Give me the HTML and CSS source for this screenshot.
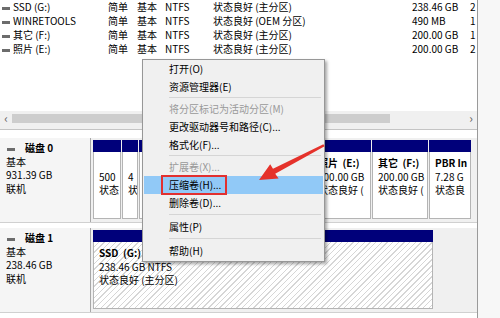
FILE: index.html
```html
<!DOCTYPE html>
<html lang="zh-CN">
<head>
    <meta charset="UTF-8">
    <title>磁盘管理</title>
    <link rel="stylesheet" href="styles.css">
</head>
<body>

    <div class="window">
        <div class="main">
            <!-- Liste des volumes -->
            <div class="volumes">
                <div class="vol-row">
                    <span><i class="dash"></i>SSD (G:)</span><span>简单</span><span>基本</span><span>NTFS</span>
                    <span>状态良好 (主分区)</span><span>238.46 GB</span><span>2</span>
                </div>
                <div class="vol-row">
                    <span><i class="dash"></i>WINRETOOLS</span><span>简单</span><span>基本</span><span>NTFS</span>
                    <span>状态良好 (OEM 分区)</span><span>490 MB</span><span>1</span>
                </div>
                <div class="vol-row">
                    <span><i class="dash"></i>其它 (F:)</span><span>简单</span><span>基本</span><span>NTFS</span>
                    <span>状态良好 (主分区)</span><span>200.00 GB</span><span>1</span>
                </div>
                <div class="vol-row">
                    <span><i class="dash"></i>照片 (E:)</span><span>简单</span><span>基本</span><span>NTFS</span>
                    <span>状态良好 (主分区)</span><span>200.00 GB</span><span>2</span>
                </div>
            </div>

            <div class="hscroll">
                <span class="scroll-btn">&lsaquo;</span>
                <span class="thumb"></span>
                <span class="track"></span>
                <span class="scroll-btn">&rsaquo;</span>
            </div>

            <div class="splitter"></div>

            <!-- Vue graphique des disques -->
            <div class="disks">
                <div class="disk">
                    <div class="disk-label">
                        <div class="disk-name"><i class="dash"></i>磁盘 0</div>
                        <div>基本</div>
                        <div>931.39 GB</div>
                        <div>联机</div>
                    </div>
                    <div class="parts">
                        <div class="part p-500">
                            <div class="bar"></div>
                            <div class="body"><b>&nbsp;</b><span>500</span><span>状态</span></div>
                        </div>
                        <div class="part p-small">
                            <div class="bar"></div>
                            <div class="body"><b>&nbsp;</b><span>4</span><span>状</span></div>
                        </div>
                        <div class="part p-sys">
                            <div class="bar"></div>
                            <div class="body"><b>(C:)</b><span>523.61 GB NTFS</span><span>状态良好</span></div>
                        </div>
                        <div class="part p-e">
                            <div class="bar"></div>
                            <div class="body"><b>照片  (E:)</b><span>200.00 GB</span><span>状态良好 (</span></div>
                        </div>
                        <div class="part p-f">
                            <div class="bar"></div>
                            <div class="body"><b>其它  (F:)</b><span>200.00 GB</span><span>状态良好 (</span></div>
                        </div>
                        <div class="part p-pbr">
                            <div class="bar"></div>
                            <div class="body"><b>PBR In</b><span>7.28 G</span><span>状态良</span></div>
                        </div>
                    </div>
                </div>

                <div class="disk">
                    <div class="disk-label">
                        <div class="disk-name"><i class="dash"></i>磁盘 1</div>
                        <div>基本</div>
                        <div>238.46 GB</div>
                        <div>联机</div>
                    </div>
                    <div class="parts">
                        <div class="part p-ssd selected">
                            <div class="bar"></div>
                            <div class="body"><b>SSD  (G:)</b><span>238.46 GB NTFS</span><span>状态良好 (主分区)</span></div>
                        </div>
                    </div>
                </div>
            </div>
        </div>
        <div class="side"></div>
    </div>

    <!-- Menu contextuel -->
    <div class="menu">
        <div class="menu-item">打开(O)</div>
        <div class="menu-item">资源管理器(E)</div>
        <div class="menu-sep"></div>
        <div class="menu-item disabled">将分区标记为活动分区(M)</div>
        <div class="menu-item">更改驱动器号和路径(C)...</div>
        <div class="menu-item">格式化(F)...</div>
        <div class="menu-sep"></div>
        <div class="menu-item disabled">扩展卷(X)...</div>
        <div class="menu-item active">压缩卷(H)...<span class="mark"></span></div>
        <div class="menu-item">删除卷(D)...</div>
        <div class="menu-sep wide"></div>
        <div class="menu-item">属性(P)</div>
        <div class="menu-sep wide"></div>
        <div class="menu-item">帮助(H)</div>
    </div>

    <svg class="pointer" width="500" height="318" viewBox="0 0 500 318">
        <polygon fill="#e5322b" points="259,180 270.2,164.2 273.0,168.8 323.4,144.2 324.6,146.2 275.2,173.8 278.6,178.4"/>
    </svg>

</body>
</html>
```

FILE: styles.css
```css
/* Base */
* {
    box-sizing: border-box;
}

body {
    margin: 0;
    width: 500px;
    height: 318px;
    overflow: hidden;
    position: relative;
    font-family: "Noto Sans CJK SC", sans-serif;
    font-size: 10px;
    color: #000;
    background-color: #fff;
}

.window {
    display: flex;
    height: 318px;
}

.main {
    width: 478px;
    display: flex;
    flex-direction: column;
    border-right: 1px solid #9a9a9a;
}

.side {
    flex: 1;
    background-color: #f7f7f7;
}

/* Liste des volumes */
.volumes {
    height: 123px;
}

.vol-row {
    display: grid;
    grid-template-columns: 106px 29px 28px 48px 199px 58px 1fr;
    height: 14px;
    line-height: 14px;
    padding-left: 2px;
    white-space: nowrap;
}

.dash {
    display: inline-block;
    width: 8px;
    height: 3px;
    margin-right: 3px;
    vertical-align: middle;
    background-color: #6c6c6c;
}

/* Barre de défilement */
.hscroll {
    height: 14px;
    display: flex;
    align-items: center;
    background-color: #f0f0f0;
}

.scroll-btn {
    width: 12px;
    text-align: center;
    font-size: 12px;
    line-height: 14px;
    color: #606060;
}

.thumb {
    width: 378px;
    height: 9px;
    background-color: #cdcdcd;
}

.track {
    flex: 1;
}

.splitter {
    height: 5px;
    background-color: #f0f0f0;
    border-bottom: 1px solid #c4c4c4;
}

/* Disques */
.disks {
    flex: 1;
    padding-top: 8px;
    background-color: #fff;
}

.disk {
    display: flex;
    height: 85px;
    margin-bottom: 5px;
    border-bottom: 1px solid #d0d0d0;
}

.disk-label {
    width: 91px;
    padding: 3px 0 0 6px;
    line-height: 13.7px;
    border-right: 1px solid #a8a8a8;
    background-color: #f5f5f5;
}

.disk-name {
    font-weight: bold;
}

.disk-name .dash {
    width: 8px;
    margin: 0 10px 0 1px;
}

.parts {
    flex: 1;
    display: flex;
    gap: 1px;
    padding: 2px 0 0 2px;
    background-color: #f0f0f0;
}

.part {
    height: 79px;
    display: flex;
    flex-direction: column;
}

.part .bar {
    height: 12px;
    background-color: #00007a;
}

.part .body {
    flex: 1;
    display: flex;
    flex-direction: column;
    padding: 4px 0 0 5px;
    line-height: 13.5px;
    white-space: pre;
    overflow: hidden;
    background-color: #fff;
    border: 1px solid #b4b4b4;
    border-top: none;
}

.part.selected .body {
    background: repeating-linear-gradient(135deg, #fff 0 3px, #d6d6d6 3px 4px);
}

.p-500 { width: 28px; }
.p-small { width: 16px; }
.p-sys { width: 172px; }
.p-e { width: 59px; }
.p-f { width: 56px; }
.p-pbr { width: 42px; }
.p-ssd { width: 340px; }

/* Menu contextuel */
.menu {
    position: absolute;
    left: 142px;
    top: 59px;
    width: 183px;
    padding: 0 1px 1px;
    background-color: #f0f0f0;
    border: 1px solid #979797;
    box-shadow: 2px 2px 3px rgba(0, 0, 0, 0.35);
}

.menu-item {
    position: relative;
    height: 18px;
    line-height: 18px;
    padding-left: 25px;
    white-space: nowrap;
}

.menu-item.disabled {
    color: #999;
}

.menu-item.active {
    background-color: #91c9f7;
}

.menu-sep {
    height: 1px;
    margin: 1px 2px 2px 25px;
    background-color: #d5d5d5;
}

.menu-sep.wide {
    margin: 2px 2px 3px 25px;
}

/* Encadré rouge autour de l'option */
.mark {
    position: absolute;
    left: 17px;
    top: -1px;
    width: 66px;
    height: 20px;
    border: 2px solid #e2302f;
}

.pointer {
    position: absolute;
    left: 0;
    top: 0;
    pointer-events: none;
}
```
